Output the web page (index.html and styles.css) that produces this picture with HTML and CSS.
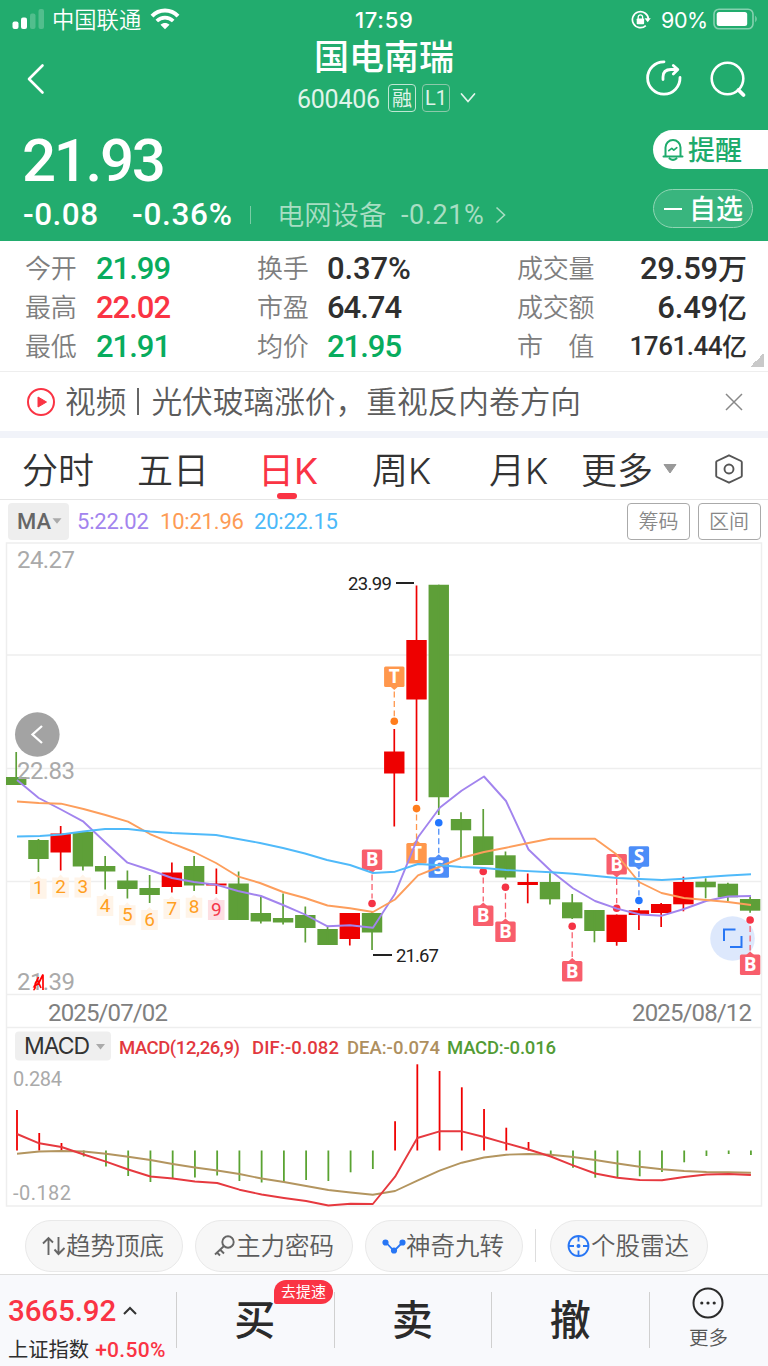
FILE: index.html
```html
<!DOCTYPE html>
<html lang="zh-CN">
<head>
<meta charset="utf-8">
<title>国电南瑞 600406</title>
<link rel="stylesheet" href="styles.css">
</head>
<body>
<header class="header">
  <div class="status">
    <svg class="signal" width="33" height="20" viewBox="0 0 33 20"><rect x="0.5" y="12.5" width="6" height="7.5" rx="2" fill="#fff"/><rect x="9" y="8.5" width="6" height="11.5" rx="2" fill="#fff"/><rect x="18" y="4.5" width="5.500" height="15.500" rx="2" fill="#fff" opacity=".22"/><rect x="26.500" y="0" width="5.500" height="20" rx="2" fill="#fff" opacity=".22"/></svg>
    <span class="carrier">中国联通</span>
    <svg class="wifi" width="30" height="22" viewBox="0 0 30 22" fill="none" stroke="#fff"><path d="M2 8.200C9.200 .6 20.800 .6 28 8.200" stroke-width="4"/><path d="M6.800 13C11.500 8.600 18.500 8.600 23.200 13" stroke-width="3.700"/><path d="M10.500 16.700C13 14.500 17 14.500 19.500 16.700L15 21.200Z" fill="#fff" stroke="none"/></svg>
    <span class="clock">17:59</span>
    <svg class="lock" width="20" height="20" viewBox="0 0 20 20" fill="none" stroke="#fff" stroke-width="1.700"><path d="M14.800 15.600A8 8 0 1 1 17.400 9"/><path d="M13.500 8.200h6.300l-3.100 4z" fill="#fff" stroke="none"/><rect x="5.700" y="8.500" width="7.400" height="5.700" rx=".8" fill="#fff" stroke="none"/><path d="M7.200 9V7.100a2.200 2.200 0 0 1 4.400 0V9" stroke-width="1.300"/></svg>
    <span class="percent">90%</span>
    <svg class="battery" width="46" height="22" viewBox="0 0 46 22"><rect x="1" y="1.200" width="39" height="19.600" rx="5" fill="none" stroke="#fff" stroke-opacity=".45" stroke-width="1.600"/><rect x="3.700" y="4" width="30.500" height="14" rx="2.500" fill="#fff"/><path d="M42.300 7.500q2.800 3.500 0 7z" fill="#fff" opacity=".5"/></svg>
  </div>
  <div class="nav">
    <svg class="back" width="20" height="32" viewBox="0 0 20 32" fill="none" stroke="#fff" stroke-width="2.600" stroke-linecap="round" stroke-linejoin="round"><path d="M17.500 2.500L4 16 17.500 29.500"/></svg>
    <div class="title">
      <h1 class="name">国电南瑞</h1>
      <div class="code"><span class="code-no">600406</span><span class="box box-rong">融</span><span class="box box-l1">L1</span><svg width="16" height="12" viewBox="0 0 16 12" fill="none" stroke="#e3f5ec" stroke-width="1.700" stroke-linecap="round"><path d="M1.500 2L8 9.500 14.500 2"/></svg></div>
    </div>
    <svg class="share" width="38" height="38" viewBox="0 0 38 38" fill="none" stroke="#fff" stroke-width="2.800" stroke-linecap="round" stroke-linejoin="round"><path d="M19 2.800A16.200 16.200 0 1 0 35 18.500"/><path d="M18 20.500V18q0-7.500 8-7.500h6"/><path d="M28.300 6.500l4.500 4-4.500 4.500"/></svg>
    <svg class="search" width="38" height="38" viewBox="0 0 38 38" fill="none" stroke="#fff" stroke-linecap="round"><circle cx="18.500" cy="18.500" r="15.800" stroke-width="2.600"/><path d="M29.500 30l5 5" stroke-width="3.800"/></svg>
  </div>
  <div class="quote">
    <div class="quote-main">
      <div class="price">21.93</div>
      <div class="change"><span class="chg">-0.08</span><span class="pct">-0.36%</span><i class="bar"></i><span class="sector">电网设备</span><span class="sector-pct">-0.21%</span><svg width="12" height="18" viewBox="0 0 12 18" fill="none" stroke="#a8dec3" stroke-width="1.600"><path d="M1.500 1.500L9.500 9 1.500 16.500"/></svg></div>
    </div>
    <div class="quote-side">
      <div class="alert"><svg width="22" height="24" viewBox="0 0 22 24" fill="none" stroke="#1dab6c" stroke-width="2" stroke-linejoin="round" stroke-linecap="round"><path d="M3.500 18V9.500a7.500 7.500 0 0 1 15 0V18"/><path d="M1.500 18.500h19M7.500 20.500q3.500 2.800 7 0"/><path d="M6.800 12.700l3-2.400 2 1.900 3-2.500" stroke-width="1.700"/></svg><span>提醒</span></div>
      <div class="watch"><i></i><span>自选</span></div>
    </div>
  </div>
</header>
<section class="stats">
  <div class="lbl">今开</div><div class="val up0">21.99</div><div class="lbl">换手</div><div class="val wide">0.37%</div><div class="lbl">成交量</div><div class="val end">29.59<b>万</b></div>
  <div class="lbl">最高</div><div class="val red">22.02</div><div class="lbl">市盈</div><div class="val">64.74</div><div class="lbl">成交额</div><div class="val end">6.49<b>亿</b></div>
  <div class="lbl">最低</div><div class="val up0">21.91</div><div class="lbl">均价</div><div class="val up0">21.95</div><div class="lbl spread"><span>市</span><span>值</span></div><div class="val end small">1761.44<b>亿</b></div>
  <i class="corner"></i>
</section>
<section class="news">
  <svg width="30" height="30" viewBox="0 0 30 30"><circle cx="15" cy="15" r="13" fill="none" stroke="#fa3444" stroke-width="2"/><path d="M12 10l8.500 5-8.500 5z" fill="#fa3444" stroke="#fa3444" stroke-linejoin="round"/></svg>
  <span class="news-text">视频<i></i>光伏玻璃涨价，重视反内卷方向</span>
  <svg class="close" width="18" height="18" viewBox="0 0 18 18" stroke="#888" stroke-width="1.500"><path d="M1 1l16 16M17 1L1 17"/></svg>
</section>
<nav class="tabs">
  <span>分时</span><span>五日</span><span class="active">日<b>K</b></span><span>周<b>K</b></span><span>月<b>K</b></span><span>更多</span>
  <svg width="14" height="10" viewBox="0 0 14 10"><path d="M1 .5h12L7 9z" fill="#999" stroke="#999" stroke-linejoin="round"/></svg>
  <svg class="gear" width="28" height="30" viewBox="0 0 28 30" fill="none" stroke="#555" stroke-width="1.900" stroke-linejoin="round"><path d="M14 1.300L26 7q.8.4.8 1.300v13.400q0 .9-.8 1.300L14 28.700 2 23q-.8-.4-.8-1.300V8.300Q1.200 7.400 2 7z"/><circle cx="14" cy="15" r="4.500"/></svg>
</nav>
<div class="ma">
  <div class="ma-btn"><span>MA</span><svg width="10" height="6" viewBox="0 0 10 6"><path d="M.5 .3h9L5 5.700z" fill="#aaa"/></svg></div>
  <span class="m5">5:22.02</span><span class="m10">10:21.96</span><span class="m20">20:22.15</span>
  <div class="ghost">筹码</div><div class="ghost">区间</div>
</div>
<svg class="chart" id="chart" width="768" height="668" viewBox="0 542 768 668">
  <g fill="none" stroke="#eee" stroke-width="1.500">
    <path d="M6.500 543V1206H761.500V543Z"/>
    <path d="M6.500 655H761.500M6.500 768.500H761.500M6.500 881.500H761.500M6.500 994.500H761.500M6.500 1027.500H761.500"/>
  </g>
  <g id="candles"></g>
  <g class="axis">
    <text x="17" y="568" textLength="58">24.27</text>
    <text x="17" y="779" textLength="58">22.83</text>
    <text x="17" y="990" textLength="58">21.39</text>
  </g>
  <path d="M33.500 990q2-1 1.500-4 0-4 3-6M38.500 977l-4 9 5-3M43 974.500l-4 8M43 974.500V990M37 979l4 9" fill="none" stroke="#f00" stroke-width="1.700"/>
  <g id="tags"></g>
  <g id="averages" fill="none" stroke-width="2" stroke-linejoin="round"></g>
  <g class="peak"><text x="348" y="590" textLength="44">23.99</text><text x="396" y="962" textLength="43">21.67</text><path d="M396 583H414M373 955H392" stroke="#222" stroke-width="2"/></g>
  <circle cx="37.300" cy="734.500" r="22.300" fill="#a3a3a3"/><path d="M42 726L32.500 734.500 42 743" fill="none" stroke="#fff" stroke-width="2.300"/>
  <circle cx="732.500" cy="938.500" r="22.300" fill="#c8dafa" fill-opacity=".62"/><path d="M724 941V929.500H735.500M741.500 936V947H730" fill="none" stroke="#2876f4" stroke-width="2"/>
  <g id="lastMark"></g>
  <g class="dates"><text x="48" y="1021" textLength="120">2025/07/02</text><text x="632" y="1021" textLength="120">2025/08/12</text></g>
  <rect x="15" y="1031.500" width="96" height="29" rx="4" fill="#efefef"/>
  <text class="ind" x="24" y="1053.500" textLength="66">MACD</text><path d="M96 1044h9l-4.500 5.500z" fill="#aaa"/>
  <g class="legend"><text x="119" y="1054" textLength="121" fill="#e2383e">MACD(12,26,9)</text><text x="252" y="1054" textLength="87" fill="#e2383e">DIF:-0.082</text><text x="347" y="1054" textLength="93" fill="#ae8f5e">DEA:-0.074</text><text x="447" y="1054" textLength="109" fill="#529b34">MACD:-0.016</text></g>
  <g class="scale"><text x="13" y="1086" textLength="49">0.284</text><text x="13" y="1200" textLength="58">-0.182</text></g>
  <g id="macd"></g>
</svg>
<div class="chips">
  <div class="chip"><svg width="24" height="22" viewBox="0 0 24 22" fill="none" stroke="#666" stroke-width="1.900"><path d="M6.500 20V3M1 8.500l5.500-5.500 4.500 4.500M16.500 2V19M12.500 14.500l4 4.500 6-6"/></svg><span>趋势顶底</span></div>
  <div class="chip"><svg width="24" height="22" viewBox="0 0 24 22" fill="none" stroke="#666" stroke-width="1.900"><circle cx="16" cy="7" r="5.700"/><path d="M12 11L3 19.500M8 14.500l4 4M5 17.500l3 3"/></svg><span>主力密码</span></div>
  <div class="chip"><svg width="24" height="22" viewBox="0 0 24 22" fill="#2876f4" stroke="#2876f4" stroke-width="1.800"><path d="M4 7.500L12 16 20.500 7.500" fill="none"/><circle cx="3.500" cy="7.500" r="2.200"/><circle cx="12" cy="15.500" r="2.200"/><circle cx="20.500" cy="7.500" r="2.200"/></svg><span>神奇九转</span></div>
  <i class="sep"></i>
  <div class="chip"><svg width="24" height="22" viewBox="0 0 24 22" fill="none" stroke="#2876f4" stroke-width="1.800"><circle cx="11.500" cy="11" r="10"/><path d="M11.500 1v5.500M11.500 15.500V21M1.500 11h5.500M16 11h5.500"/><circle cx="11.500" cy="11" r="2" fill="#2876f4" stroke="none"/></svg><span>个股雷达</span></div>
</div>
<footer class="bottom">
  <div class="index">
    <div class="idx-top"><span>3665.92</span><svg width="14" height="9" viewBox="0 0 14 9" fill="none" stroke="#333" stroke-width="2"><path d="M1 8l6-6 6 6"/></svg></div>
    <div class="idx-bot"><span>上证指数</span><em>+0.50%</em></div>
  </div>
  <div class="act">买<em class="badge">去提速</em></div>
  <div class="act">卖</div>
  <div class="act">撤</div>
  <div class="more"><svg width="32" height="32" viewBox="0 0 32 32" fill="none" stroke="#2b2b2b" stroke-width="2"><circle cx="16" cy="16" r="14.500"/><g fill="#2b2b2b" stroke="none"><circle cx="9.800" cy="16" r="1.600"/><circle cx="16" cy="16" r="1.600"/><circle cx="22.200" cy="16" r="1.600"/></g></svg><span>更多</span></div>
</footer>
<script src="chart.js"></script>
</body>
</html>
```

FILE: styles.css
```css
* { box-sizing: border-box; }
body { margin: 0; width: 768px; height: 1366px; overflow: hidden; background: #fff; color: #2f2f2f; font-family: Roboto, "Noto Sans CJK SC", sans-serif; }
svg { display: block; flex: none; }
em, i { font-style: normal; }
.header { height: 241px; background: #22ac6e; color: #fff; }

.status { height: 38px; display: flex; align-items: center; padding-left: 12px; line-height: 38px; white-space: nowrap; }
.signal { width: 33px; }
.carrier { width: 91px; margin: 2px 0 0 7px; font-size: 22.300px; font-weight: 350; }
.wifi { margin: -1px 0 0 7px; }
.clock { width: 62px; margin: 1px 0 0 175px; font: 500 22px/38px Inter, sans-serif; letter-spacing: .7px; }
.lock { margin: 1px 0 0 214px; }
.percent { width: 48px; margin: 1px 0 0 10px; font: 400 21.500px/38px Inter, sans-serif; letter-spacing: -.4px; }
.battery { margin-left: 4px; }

.nav { height: 80px; display: flex; align-items: flex-start; }
.back { margin: 25px 0 0 25px; }
.title { width: 300px; margin-left: 189px; }
.name { margin: 0; height: 38px; padding-top: 2px; text-align: center; font-size: 35px; font-weight: 500; line-height: 38px; }
.code { height: 40px; display: flex; align-items: center; padding-left: 63px; color: #e0f4ea; }
.code-no { width: 83px; font-size: 25px; letter-spacing: -.25px; padding-top: 7px; }
.box { width: 28px; height: 28px; margin: 4px 0 0 6px; border: 1.500px solid #bfe7d3; border-radius: 4px; text-align: center; font-size: 20px; line-height: 28px; }
.box-l1 { border-color: #8cc9aa; font-size: 20px; line-height: 26px; }
.code .box-rong { margin-left: 8px; }
.code svg { margin: 4px 0 0 10px; }
.share { margin: 21px 0 0 111px; }
.search { margin: 22px 0 0 26px; }

.quote { height: 122px; display: flex; justify-content: space-between; }
.price { height: 76px; padding: 8px 0 0 22px; font-size: 60px; font-weight: 500; line-height: 70px; letter-spacing: -2.300px; }
.change { display: flex; align-items: center; height: 42px; font-size: 31.500px; font-weight: 500; padding-left: 23px; line-height: 42px; white-space: nowrap; }
.chg { width: 109px; letter-spacing: .5px; }
.pct { width: 105px; letter-spacing: .7px; }
.bar { width: 1px; height: 18px; background: #7acda5; margin-left: 13px; }
.sector { width: 110px; margin-left: 26px; padding-top: 2px; color: #a8dec3; font-size: 27.300px; font-weight: 350; }
.sector-pct { width: 91px; margin-left: 14px; color: #a8dec3; font-size: 27px; font-weight: 400; letter-spacing: .6px; }
.change svg { margin-left: 3px; }
.quote-side { width: 115px; }
.alert { height: 39px; margin-top: 12px; background: #fff; color: #1dab6c; border-radius: 20px 0 0 20px; display: flex; align-items: center; font-size: 27px; font-weight: 500; padding-left: 9px; }
.alert span { margin-left: 4px; padding-top: 3px; line-height: 39px; }
.watch { width: 100px; height: 39px; margin-top: 20px; border: 1.500px solid #90d5b4; border-radius: 20px; background: #39b57e; display: flex; align-items: center; font-size: 27px; font-weight: 500; line-height: 36px; }
.watch i { width: 18px; height: 2px; background: #fff; margin: 0 7px 0 10px; }
.watch span { padding-top: 2px; }

.stats { position: relative; height: 131px; padding: 8px 0 0 25px; display: grid; grid-template-columns: 71px 161px 70px 190px 96px 134px; grid-auto-rows: 39px; line-height: 39px; border-bottom: 1.500px solid #eee; }
.lbl { padding-top: 1px; font-size: 26px; font-weight: 350; color: #7e7e7e; white-space: nowrap; letter-spacing: -.2px; }
.spread { display: flex; justify-content: space-between; width: 77px; }
.val { font-size: 31px; font-weight: 500; white-space: nowrap; letter-spacing: -1px; }
.val.wide { letter-spacing: -.1px; }
.val.end { text-align: right; letter-spacing: -.2px; }
.val b { display: inline-block; position: relative; top: 1px; line-height: 1; font-size: 29px; font-weight: 500; letter-spacing: 0; }
.val.small { font-size: 26px; letter-spacing: -.5px; }
.val.small b { font-size: 25px; }
.up0 { color: #08ac5e; }
.red { color: #fa3444; }
.corner { position: absolute; right: 4px; bottom: 4px; width: 14px; height: 14px; background: linear-gradient(135deg, transparent 50%, #c9c9c9 50%); }

.news { height: 59px; display: flex; align-items: center; padding-left: 26px; }
.news-text { display: flex; align-items: center; width: 659px; margin-left: 9px; padding-top: 3px; font-size: 30.700px; font-weight: 350; line-height: 56px; color: #5c5c5c; white-space: nowrap; }
.news-text i { width: 2px; height: 27px; background: #666; margin: 0 12px 3px 11px; }
.news .close { margin-left: 1px; }

.tabs { height: 69px; border-top: 7px solid #f1f3f9; border-bottom: 1.500px solid #e6e6e6; display: grid; grid-template-columns: 115px 121px 114px 117px 92px 82px 52px 28px; align-items: center; padding-left: 22px; font-size: 36px; font-weight: 350; line-height: 62px; color: #333; font-family: "Noto Sans CJK SC", sans-serif; }
.tabs span { height: 61px; line-height: 60px; white-space: nowrap; }
.tabs b { font: 300 36px/40px Inter, sans-serif; letter-spacing: 0; }
.tabs .active { position: relative; color: #fa3444; font-weight: 400; }
.tabs .active b { font-weight: 400; }
.tabs .active::after { content: ""; position: absolute; left: 19px; bottom: 0; width: 20px; height: 6px; border-radius: 3px; background: #fa3444; }

.ma { height: 42px; display: flex; align-items: center; padding-left: 8px; font-size: 22px; white-space: nowrap; }
.ma-btn { width: 61px; height: 37px; background: #eee; border-radius: 4px; display: flex; align-items: center; padding-left: 9px; color: #666; font-weight: 500; }
.ma-btn svg { margin-left: 1px; }
.m5 { width: 75px; margin-left: 8px; color: #a284ee; letter-spacing: -.2px; }
.m10 { width: 85px; margin-left: 8px; color: #fd9b55; letter-spacing: -.2px; }
.m20 { width: 90px; margin-left: 9px; color: #4bb9f9; letter-spacing: -.2px; }
.ghost { width: 63px; height: 37px; margin-right: 7.500px; border: 1.500px solid #aaa; border-radius: 4px; text-align: center; font-size: 20px; font-weight: 350; line-height: 37px; color: #888; }
.m20 + .ghost { margin-left: 283px; }

.chart { font-family: Roboto, sans-serif; }
.axis { fill: #aaa; font-size: 24px; }
.peak { fill: #222; font-size: 18.500px; }
.dates { fill: #808080; font-size: 24px; }
.ind { fill: #333; font-size: 23px; font-family: Inter, sans-serif; }
.legend { font-size: 18.500px; font-weight: 500; }
.scale { fill: #aaa; font-size: 20px; }
.mark { font: 700 19px "Open Sans", sans-serif; text-anchor: middle; fill: #fff; }
.count { font-size: 19px; text-anchor: middle; }

.chips { height: 64px; display: flex; align-items: flex-start; padding: 10px 0 0 24.500px; }
.chip { width: 158px; height: 52px; margin-right: 12px; border: 1.500px solid #e9e9e9; border-radius: 26px; background: #f7f7f7; display: flex; align-items: center; padding-left: 16.500px; font-size: 24.500px; font-weight: 350; color: #5c5c5c; line-height: 48px; white-space: nowrap; }
.chip span { padding-top: 2px; }
.sep { width: 1px; height: 33px; margin: 9px 14px 0 0; background: #ddd; }

.bottom { height: 92px; border-top: 1.500px solid #dedede; background: #f8f9fc; display: flex; }
.index { position: relative; width: 176px; padding: 16px 0 0 8px; }
.idx-top { display: flex; align-items: center; height: 40px; font-size: 29.500px; font-weight: 500; color: #fa3444; letter-spacing: -.1px; }
.idx-top span { width: 115px; }
.idx-top svg { margin-bottom: 2px; }
.idx-bot { display: flex; height: 37px; line-height: 38px; font-size: 20.300px; white-space: nowrap; }
.idx-bot em { margin-left: 6px; color: #fa3444; font-weight: 500; font-size: 21px; letter-spacing: .3px; }
.act { position: relative; width: 157.700px; height: 92px; text-align: center; line-height: 93px; font-size: 41px; font-weight: 500; color: #2b2b2b; }
.act::before, .more::before { content: ""; position: absolute; left: 0; top: 17px; width: 1px; height: 56px; background: #d0d0d0; }
.badge { position: absolute; left: 98px; top: 5px; width: 59px; height: 24px; border-radius: 12px 12px 12px 2px; background: #fa3444; color: #fff; font-size: 15px; font-weight: 400; line-height: 25px; }
.more { position: relative; width: 119px; display: flex; flex-direction: column; align-items: center; padding-top: 12px; color: #555; font-size: 19.500px; font-weight: 350; }
.more span { line-height: 40px; }
```

FILE: chart.js
```js
const STEP = 22.24;
const RED = '#ee0000';
const GREEN = '#5e9f38';
const put = (id, html) => { document.getElementById(id).innerHTML = html; };

// colour, high, body top, body bottom, low
const candles = [
  ['g',752,777,785,785],['g',839,840,859,872],['r',826,833.5,852.5,870.5],['g',832,832,866.5,870.5],
  ['g',856,866,871.5,889.5],['g',870.5,880.5,889,898.5],['g',875,888,895,903],['r',862.5,872.5,887,892.5],
  ['g',856,866,885.5,891],['r',868.5,883.5,885.5,894],['g',871.5,883.5,920,920],['g',896.5,913,921.5,923.5],
  ['g',893.5,918,922.5,924.5],['g',906.5,915,928,942.5],['g',926.5,929,945,945],['r',913,913,939,945.5],
  ['g',911.5,913,932.5,950],['r',729,751.5,773.5,826.5],['r',585.5,640,699.5,801],['g',584.7,584.7,797.3,815],
  ['g',812.3,819,830.3,857.5],['g',809,836.3,865,865],['g',851.5,855.3,877.5,879.5],['r',873.5,882,885,903.3],
  ['g',873.3,882,899.3,904.5],['g',894,902.3,918.3,919],['g',910,910,931,942.3],['r',914.5,914.7,942,945.7],
  ['r',908,910.3,915,930],['r',903,904,913,927],['r',876.7,882,904.3,911.3],['g',878.3,881.7,887.3,898.3],
  ['g',882.7,883.7,897.3,901.7],['g',895.7,899,910.7,912.7]
];
put('candles', candles.map(([c, h, t, b, l], i) => {
  const x = 16.2 + STEP * i, f = c === 'r' ? RED : GREEN;
  return `<path d="M${x - 10.2} ${t}h20.4V${b}h-20.4z" fill="${f}"/><path d="M${x} ${h}V${l}" stroke="${f}" stroke-width="1.7"/>`;
}).join(''));

// nine-turn counters: bottom edge of each tag
const counts = [898.7, 897.5, 897.5, 916, 925.3, 930, 919, 917.7, 920];
const countTags = counts.map((b, i) => {
  const x = 38.3 + STEP * i, last = i === 8;
  return `<path d="M${x - 8.3} ${b}v-20h5.500l2.800-3 2.800 3h5.500v20z" fill="${last ? '#fddfe3' : '#fff4e8'}"/><text class="count" x="${x}" y="${b - 4.5}" fill="${last ? '#f5384b' : '#ff9f1f'}">${i + 1}</text>`;
}).join('');

// trade markers: index, letter, box top, dot centre
const marks = [[16,'B',849.5,903.5],[17,'T',666.5,721.3],[18,'T',843,808.6],[19,'S',857.3,822.7],[21,'B',905.5,871.5],
  [22,'B',921.5,887.3],[25,'B',961,926.3],[27,'B',854,908.3],[28,'S',846.3,900.5]];
const box = { B: '#f85e6c', T: '#ff974c', S: '#4c8df8' };
const dot = { B: '#f53345', T: '#ff7d1c', S: '#2276ff' };
const marker = ([i, s, t, d]) => {
  const x = 16.2 + STEP * i, below = d > t;
  const tip = below ? `M${x - 4} ${t + 20}l4 3.500 4-3.500z` : `M${x - 4} ${t + .5}l4-3.500 4 3.500z`;
  return `<path d="M${x} ${below ? t + 25 : d + 6}V${below ? d - 5 : t - 4}" stroke="${box[s]}" stroke-width="1.300" stroke-dasharray="6 3.500"/>
  <rect x="${x - 10.2}" y="${t}" width="20.4" height="20.4" rx="1.500" fill="${box[s]}"/><path d="${tip}" fill="${box[s]}"/>
  <circle cx="${x}" cy="${d}" r="3.800" fill="${dot[s]}"/><text class="mark" x="${x}" y="${t + 16.5}">${s}</text>`;
};
put('tags', countTags + marks.map(marker).join(''));
put('lastMark', marker([33, 'B', 954.5, 920]));

const line = (pts, color, w) => `<polyline points="${pts}" fill="none" stroke="${color}" stroke-width="${w || 1.900}" stroke-linejoin="round"/>`;
put('averages',
  line('17,780 38.700,798 61,809.500 83.500,821.700 105.500,842.500 127.500,862.700 150,870 172,878 194,882 216,884.700 238,891 261,896 283,905 305,914.500 327.500,926.300 350,925.300 373,927.700 395,893.700 418,837.300 440,807.500 461.500,790.700 484,776.500 506,801 528.500,849.500 551,871 573,888.300 595,901 617,908.700 640,914.500 662,915.700 684,909 706,901 728,896.500 751,896', '#a284ee') +
  line('17,801.500 38.700,803 61,803.700 83.500,809 105.500,815 128,821.700 150,834 172,843.300 194,852 216,863 238.500,876.700 260,883 283,892 305,898 327.500,905.500 350,908.300 373,912 395,899.500 418,875.300 440,866.500 461,858 484,852 506,847.700 528.500,843 550,838.700 595,838.700 616,854 639,882 661.500,893 684,898 706,900 728,902 751,905', '#fd9e5c') +
  line('17,836.500 40,836 61,834.500 83,831.500 105,829 128,829 150,831.500 172,833 194,834 216,835 238,839 260,843 283,848 305,853.500 327,860 350,865 373,873 395,871.700 418,864 440,865.300 461,867 484,868 506,870 551,872.300 573,873.700 617,878 640,879 662,880 684,878.700 706,877 728,875.500 751,874.300', '#50bafa'));

const bars = [1110,1133,1143,1156.5,1166.5,1176,1182,1178,1177.5,1175.5,1181,1182.5,1182,1180,1181,1172.3,1169,1121.3,1064.3,1071,1087.3,1109,1127.7,1142,1155,1167.7,1177.7,1178,1176.3,1172,1162.3,1156,1154,1155];
const dif = [1134,1143.3,1147,1154.5,1161.7,1169.5,1176.5,1178.5,1181.5,1183,1189.7,1194.5,1198,1201,1205.5,1203.7,1204,1176.7,1138,1131.3,1131.3,1137,1143.3,1149.5,1156.5,1165.3,1173.5,1177.7,1180,1180.3,1177,1174.5,1174,1175];
const dea = [1153.7,1151.5,1151,1151.5,1153.7,1156.7,1160,1164,1167.5,1170.5,1174,1178.5,1182,1186,1190,1192.5,1194.7,1191,1180.7,1170.7,1162.7,1157.5,1154.7,1154,1154.7,1157,1160,1163.5,1166.7,1169.3,1171,1172,1172.3,1172.7];
const points = a => a.map((y, i) => `${17 + STEP * i},${y}`).join(' ');
put('macd', bars.map((y, i) => `<path d="M${17 + STEP * i} 1150.500V${y}" stroke="${y < 1150 ? '#f00000' : '#5aa332'}" stroke-width="1.800"/>`).join('') +
  line(points(dea), '#b3955f') + line(points(dif), '#e6393f'));
```
